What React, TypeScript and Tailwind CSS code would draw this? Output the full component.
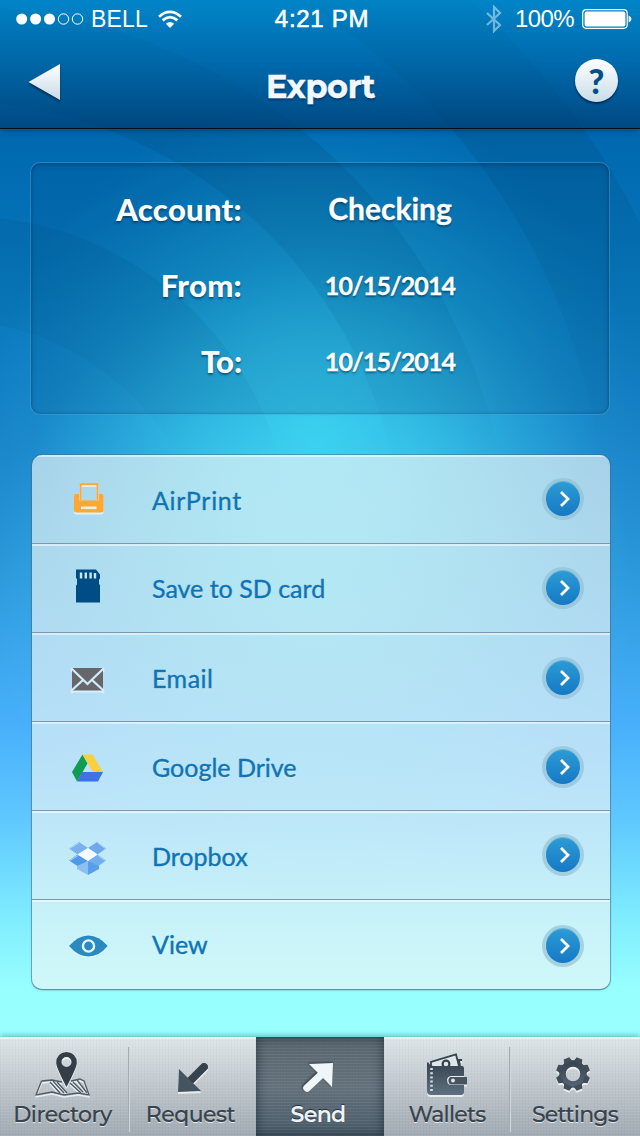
import React from "react";

const LATO = "font-['Lato','Liberation_Sans',sans-serif]";
const HELV = "font-['Liberation_Sans',Arial,sans-serif]";

function Rings() {
  return (
    <svg width="640" height="460" viewBox="0 0 640 460" className="absolute left-0 top-0">
      <defs>
        <linearGradient id="ringFade" x1="0" y1="0" x2="0" y2="460" gradientUnits="userSpaceOnUse">
          <stop offset="0" stopColor="#003a66" stopOpacity=".26" />
          <stop offset=".45" stopColor="#004a75" stopOpacity=".17" />
          <stop offset=".8" stopColor="#005580" stopOpacity=".08" />
          <stop offset="1" stopColor="#005580" stopOpacity="0" />
        </linearGradient>
      </defs>
      <g fill="url(#ringFade)">
        <path d="M0 218A330 330 0 0 1 280 460H180A270 270 0 0 0 0 325Z" />
        <path d="M0 8A560 560 0 0 1 500 460H392A455 455 0 0 0 0 104Z" />
        <path d="M300 0A640 640 0 0 1 600 460H640V223A760 760 0 0 0 470 0Z" />
      </g>
    </svg>
  );
}

function StatusBar() {
  return (
    <div className={`grid h-[38px] grid-cols-[1fr_100px_1fr] items-center text-white ${HELV}`}>
      <div className="flex items-center pl-[16px]">
        <svg width="68" height="14" viewBox="0 0 68 14">
          <g fill="#fff">
            <circle cx="5.700" cy="7" r="5.500" />
            <circle cx="19.600" cy="7" r="5.500" />
            <circle cx="33.500" cy="7" r="5.500" />
          </g>
          <g fill="none" stroke="#fff" strokeWidth="1">
            <circle cx="47.500" cy="7" r="5.200" />
            <circle cx="61.500" cy="7" r="5.200" />
          </g>
        </svg>
        <span className="ml-[7px] text-[23px] leading-none tracking-[0.2px]">BELL</span>
        <svg width="24" height="18" viewBox="0 0 24 18" className="ml-[10px]">
          <path d="M12 18 7.800 13.800Q12 10 16.200 13.800Z" fill="#fff" />
          <path d="M4.600 10.400Q12 3.800 19.400 10.400M1 6.700Q12 -3 23 6.700" fill="none" stroke="#fff" strokeWidth="2.800" />
        </svg>
      </div>
      <span className="whitespace-nowrap pl-[4px] text-center text-[24px] leading-none tracking-[0.7px] [-webkit-text-stroke:0.6px_white]">4:21 PM</span>
      <div className="flex items-center justify-end pr-[8px]">
        <svg width="16" height="28" viewBox="0 0 16 28" className="mr-[13px] opacity-45">
          <path d="M1 8 14 20 8 26V2L14 8 1 20" fill="none" stroke="#fff" strokeWidth="2.200" />
        </svg>
        <span className="mr-[8px] text-[24px] leading-none tracking-[-0.6px]">100%</span>
        <svg width="50" height="20" viewBox="0 0 50 20">
          <rect x=".7" y=".7" width="44.500" height="18.600" rx="3.500" fill="none" stroke="#fff" strokeWidth="1.200" />
          <rect x="2.600" y="2.600" width="40.800" height="14.800" rx="2" fill="#fff" />
          <path d="M46.600 6.500Q49.500 7.500 49.500 10T46.600 13.500Z" fill="#fff" />
        </svg>
      </div>
    </div>
  );
}

function Header() {
  return (
    <header className="relative z-10 h-[129px] border-b border-[#04101f] bg-[linear-gradient(rgba(0,140,206,0.8),rgba(0,110,175,0.65)_45%,rgba(0,62,116,0.75))] shadow-[0_2px_6px_rgba(0,40,70,0.45)]">
      <StatusBar />
      <div className="flex h-[90px] items-center justify-between pl-[28px] pr-[22px]">
        <svg width="33" height="38" viewBox="28 64 33 38" className="drop-shadow-[0_2px_1px_rgba(0,20,50,0.6)]">
          <defs>
            <linearGradient id="btn" x1="0" y1="0" x2="0" y2="1">
              <stop offset="0" stopColor="#fff" />
              <stop offset="1" stopColor="#c8dbe6" />
            </linearGradient>
          </defs>
          <path d="M28.500 82 60 64V100Z" fill="url(#btn)" />
        </svg>
        <h1 className="ml-[5px] mt-[7px] font-['Montserrat','Lato',sans-serif] text-[32px] font-bold leading-none tracking-[-0.4px] text-[#f2f8ff] [-webkit-text-stroke:0.4px_#f2f8ff] [text-shadow:0_2px_2px_rgba(0,20,50,0.45)]">
          Export
        </h1>
        <div className="mb-[5px] flex size-[43px] items-center justify-center rounded-full bg-linear-to-b from-white to-[#cadde8] shadow-[0_2px_2px_rgba(0,20,50,0.6)]">
          <span className="font-['Lato',sans-serif] text-[34px] font-black leading-none text-[#005087]">?</span>
        </div>
      </div>
    </header>
  );
}

const fields = [
  { label: "Account:", value: "Checking", cls: "text-[30px] pb-[3px]", track: "tracking-[0.3px]" },
  { label: "From:", value: "10/15/2014", cls: "text-[25px] pt-px tracking-[-0.9px]", track: "tracking-[0.3px]" },
  { label: "To:", value: "10/15/2014", cls: "text-[25px] pt-px tracking-[-0.9px]", track: "" },
];

function Filters() {
  return (
    <section
      className={`mx-[30px] mt-[33px] flex h-[253px] flex-col rounded-[10px] border border-[#5cc3ee]/35 bg-[#004a80]/20 pt-[8px] font-bold text-white shadow-[inset_0_2px_5px_rgba(0,40,80,0.35),inset_0_0_3px_rgba(0,40,80,0.25)] ${LATO}`}
    >
      {fields.map((f) => (
        <div key={f.label} className="flex h-[76px] items-center leading-none [text-shadow:0_2px_2px_rgba(0,30,60,0.5)]">
          <span className={`w-[211px] text-right text-[31px] font-black ${f.track}`}>{f.label}</span>
          <span className={`ml-[53px] w-[190px] text-center [-webkit-text-stroke:0.3px_white] ${f.cls}`}>{f.value}</span>
        </div>
      ))}
    </section>
  );
}

const icons: Record<string, React.ReactNode> = {
  print: (
    <svg width="40" height="40" viewBox="68 479.5 40 40" className="drop-shadow-[0_2px_0_rgba(255,255,255,0.6)]">
      <path d="M76 494.500H79V501H99V494.500H101.500Q103.500 494.500 103.500 496.500V511Q103.500 513 101.500 513H76Q74 513 74 511V496.500Q74 494.500 76 494.500Z" fill="#ffa72f" />
      <path d="M80.600 501V484.600H97.400V501" fill="none" stroke="#ffa72f" strokeWidth="1.800" />
      <rect x="81" y="507" width="15.500" height="2.600" fill="#e8eee8" />
    </svg>
  ),
  sd: (
    <svg width="40" height="40" viewBox="68 568.5 40 40">
      <path d="M76 570H96L100 575V579L99 580V585H100V603H76V586L77 585V579H76Z" fill="#004c84" />
      <path d="M81 573V579M85.800 573V579M90.600 573V579M95 573.500V579" stroke="#cce8f6" strokeWidth="2.400" />
    </svg>
  ),
  mail: (
    <svg width="40" height="40" viewBox="68 657.5 40 40" className="drop-shadow-[0_2px_0_rgba(255,255,255,0.5)]">
      <rect x="72" y="668.500" width="31" height="22.500" fill="#65676a" />
      <path d="M71 668.500 87.500 684.500 104 668.500M71 691.500 83 680.500M104 691.500 92 680.500" fill="none" stroke="#d3ebf7" strokeWidth="2.300" />
    </svg>
  ),
  drive: (
    <svg width="40" height="40" viewBox="68 746.5 40 40">
      <path d="M82.500 755 87.500 764 77 782 72 772.500Z" fill="#109d52" />
      <path d="M82.500 755H92.500L103 772.500H93Z" fill="#fcce42" />
      <path d="M82 772.500H103L98 782H77Z" fill="#3f72e6" />
    </svg>
  ),
  dropbox: (
    <svg width="40" height="40" viewBox="68 835.5 40 40" className="overflow-visible">
      <path d="M69 849 79 842.500 88 848.500 77.500 855Z" fill="#78b2ee" />
      <path d="M88 848.500 97 842.500 106 849 97.500 855Z" fill="#6eaaeb" />
      <path d="M69 861 77.500 855 88 861.500 79 867.500Z" fill="#4e9ae8" />
      <path d="M88 861.500 97.500 855 106 861 97 867.500Z" fill="#72adec" />
      <path d="M77.500 855 88 848.500 97.500 855 88 861.500Z" fill="#f4fbff" />
      <path d="M77 866.500 88 861.500V875.500L77 869.500Z" fill="#8ebff1" />
      <path d="M99 866.500 88 861.500V875.500L99 869.500Z" fill="#579fe9" />
      <path d="M70 849 79 843.500M98 843.500 105 849M70 861 78 856M98 856 105 861" stroke="#abd6f8" strokeWidth="1" />
    </svg>
  ),
  view: (
    <svg width="40" height="40" viewBox="68 924.5 40 40" className="drop-shadow-[0_1px_0_rgba(255,255,255,0.5)]">
      <path d="M69 945.500Q78 935 88.300 935Q99 935 107.700 945.500Q99 956 88.300 956Q78 956 69 945.500Z" fill="#2b89c2" />
      <circle cx="88.500" cy="945.500" r="5.600" fill="none" stroke="#e1f7fb" strokeWidth="2.400" />
    </svg>
  ),
};

const rows = [
  { icon: "print", label: "AirPrint", text: "pt-[2px] tracking-[0.7px]", btn: "" },
  { icon: "sd", label: "Save to SD card", text: "", btn: "" },
  { icon: "mail", label: "Email", text: "pt-[2px] tracking-[0.5px]", btn: "mt-[1px]" },
  { icon: "drive", label: "Google Drive", text: "pt-[2px]", btn: "mt-[2px]" },
  { icon: "dropbox", label: "Dropbox", text: "pt-[2px]", btn: "" },
  { icon: "view", label: "View", text: "", btn: "mt-[2px]" },
];

function ExportList() {
  return (
    <ul className={`ml-[32px] mr-[30px] mt-[40px] overflow-hidden rounded-[10px] shadow-[0_0_0_1px_rgba(70,110,140,0.5),0_1px_2px_rgba(50,90,110,0.6)] ${LATO}`}>
      {rows.map((r) => (
        <li
          key={r.label}
          className="flex h-[89px] items-center border-b border-[#7d98ad] bg-[#ebf4f6]/67 pl-[36px] pr-[26px] shadow-[inset_0_2px_0_rgba(255,255,255,0.5)] last:border-b-0"
        >
          {icons[r.icon]}
          <span className={`ml-[44px] flex-1 text-[25px] leading-none text-[#0f74b4] [-webkit-text-stroke:0.4px_#0f74b4] [text-shadow:0_1px_0_rgba(255,255,255,0.5)] ${r.text}`}>
            {r.label}
          </span>
          <span className={`flex size-[42px] items-center justify-center rounded-full bg-[#90bfd3]/65 ${r.btn}`}>
            <span className="flex size-[34px] items-center justify-center rounded-full bg-linear-to-b from-[#2c9bd5] to-[#1579c4] shadow-[0_-1px_0_#62b7d8]">
              <svg width="12" height="18" viewBox="0 0 12 18" className="ml-[3px]">
                <path d="M2 2 9 9 2 16" fill="none" stroke="#fff" strokeWidth="2.800" />
              </svg>
            </span>
          </span>
        </li>
      ))}
    </ul>
  );
}

const tabIcons: Record<string, React.ReactNode> = {
  directory: (
    <>
      <g fill="none" stroke="#4f5d68" strokeWidth="1.300">
        <path d="M41.500 1081 52 1080 62 1082M71 1081 80 1079 84 1081 89 1095 78 1093 64 1095 52 1092 36 1095 41.500 1081" />
        <path d="M50 1082 60 1093M53 1081 64 1093M57 1082 67 1093M70 1083 81 1093M73 1082 83 1092M77 1080 87 1093" />
      </g>
      <path fillRule="evenodd" d="M66.500 1052Q76.800 1053 76.800 1063Q76.500 1068 66.500 1087Q56.500 1068 56.200 1063Q56.200 1053 66.500 1052ZM66.500 1057A5 5 0 1 0 66.500 1067A5 5 0 1 0 66.500 1057Z" fill="#333e47" />
    </>
  ),
  request: (
    <>
      <path d="M204 1067 188 1083" stroke="#36424c" strokeWidth="8" strokeLinecap="round" />
      <path d="M179 1069 201 1091 178 1092Z" fill="#46545f" />
    </>
  ),
  send: (
    <>
      <path d="M307 1088 324 1072" stroke="#f0f5f9" strokeWidth="7.500" strokeLinecap="round" />
      <path d="M309 1064 333 1063 332 1087Z" fill="#f0f5f9" />
    </>
  ),
  wallets: (
    <>
      <path d="M431 1066V1062L456 1054.500 459 1066" fill="#dfe6e9" stroke="#36424c" strokeWidth="1.800" />
      <path d="M458 1060H462M460 1066 459 1060" fill="none" stroke="#36424c" strokeWidth="1.800" />
      <circle cx="446" cy="1064" r="3.400" fill="none" stroke="#36424c" strokeWidth="2.200" />
      <path d="M428 1062Q430 1066 434 1066H462Q464 1066 464 1068V1076H452Q447 1076 447 1080.500T452 1085H464V1092Q464 1095 461 1095H431Q427 1095 427 1091V1063Z" fill="url(#tabInk)" />
      <path d="M451 1077H467V1084.500H451Q448.500 1084 448.500 1080.500T451 1077Z" fill="#46545f" />
      <circle cx="453" cy="1080.500" r="1.900" fill="#e3e9ed" />
      <path d="M431.500 1068V1093" stroke="#d4dce1" strokeWidth="2.600" strokeDasharray="2 2.200" />
    </>
  ),
  settings: (
    <g>
      <circle cx="573" cy="1074" r="10.500" fill="none" stroke="url(#tabInk)" strokeWidth="6.500" />
      {[22.5, 67.5, 112.5, 157.5, 202.5, 247.5, 292.5, 337.5].map((a) => (
        <path key={a} d="M568.500 1062 570 1057H576L577.500 1062Z" fill="#414e59" transform={`rotate(${a} 573 1074)`} />
      ))}
    </g>
  ),
};

const tabs = [
  { id: "directory", label: "Directory", w: "w-[129px]", box: "0 1047 129 54", width: 129, text: "tracking-[-0.5px] mr-[4px]" },
  { id: "request", label: "Request", w: "w-[127px]", box: "129 1047 127 54", width: 127, text: "tracking-[-0.5px] mr-[4px]" },
  { id: "send", label: "Send", w: "w-[128px]", box: "256 1047 128 54", width: 128, text: "tracking-[-0.7px] mr-[4px]" },
  { id: "wallets", label: "Wallets", w: "w-[126px]", box: "384 1047 126 54", width: 126, text: "tracking-[-0.8px]" },
  { id: "settings", label: "Settings", w: "w-[130px]", box: "510 1047 130 54", width: 130, text: "tracking-[-0.8px]" },
];

function TabBar() {
  return (
    <nav className="flex h-[99px] shadow-[0_-2px_5px_rgba(40,120,140,0.45)]">
      {tabs.map((t) => {
        const active = t.id === "send";
        return (
          <div
            key={t.id}
            className={`relative flex flex-col items-center pt-[10px] ${t.w} ${
              active
                ? "bg-linear-to-b from-[#59666f] via-[#64727c] to-[#4a5b69] shadow-[inset_0_0_12px_rgba(20,32,45,0.75)]"
                : "bg-linear-to-b from-[#dfe6e9] to-[#a1aab2] shadow-[inset_0_2px_0_rgba(255,255,255,0.6)]"
            }`}
          >
            <div className="absolute inset-0 bg-[repeating-linear-gradient(0deg,rgba(255,255,255,0.06)_0px,rgba(255,255,255,0.06)_1px,transparent_1px,transparent_3px),repeating-linear-gradient(90deg,rgba(40,50,60,0.03)_0px,rgba(40,50,60,0.03)_1px,transparent_1px,transparent_3px)]" />
            {(t.id === "directory" || t.id === "wallets") && (
              <div className="absolute -right-px top-[10px] z-10 h-[85px] w-[2px] bg-linear-to-r from-[#8d989f] to-[#e6ebee]" />
            )}
            <svg
              width={t.width}
              height="54"
              viewBox={t.box}
              className={active ? "relative drop-shadow-[-1px_-1px_1px_rgba(20,30,40,0.6)]" : "relative drop-shadow-[0_2px_0_rgba(255,255,255,0.7)]"}
            >
              <defs>
                <linearGradient id="tabInk" x1="0" y1="1055" x2="0" y2="1095" gradientUnits="userSpaceOnUse">
                  <stop offset="0" stopColor="#2f3a43" />
                  <stop offset="1" stopColor="#5e7080" />
                </linearGradient>
              </defs>
              {tabIcons[t.id]}
            </svg>
            <span
              className={`relative mt-px whitespace-nowrap font-['Montserrat','Inter',sans-serif] text-[22px] leading-[26px] ${t.text} ${
                active
                  ? "font-semibold text-[#eef3f7] [text-shadow:0_-1px_1px_rgba(20,30,40,0.8)]"
                  : "font-medium text-[#37434d] [-webkit-text-stroke:0.2px_#37434d] [text-shadow:0_1px_0_rgba(255,255,255,0.7)]"
              }`}
            >
              {t.label}
            </span>
          </div>
        );
      })}
    </nav>
  );
}

export default function App() {
  return (
    <div className="relative flex h-[1136px] w-[640px] flex-col overflow-hidden bg-[radial-gradient(ellipse_320px_330px_at_315px_600px,rgba(90,225,245,0.5),rgba(90,225,245,0.28)_50%,rgba(90,225,245,0)_100%),radial-gradient(ellipse_330px_350px_at_315px_445px,rgba(48,206,240,0.95),rgba(48,204,240,0.7)_30%,rgba(45,200,235,0.34)_60%,rgba(40,190,230,0.1)_85%,rgba(40,190,230,0)_100%),linear-gradient(#0069b0_0px,#0069b0_140px,#0878bd_300px,#1b85ca_450px,#2d9add_580px,#48b0fb_725px,#5fc8ff_820px,#80edff_920px,#98ffff_990px,#9bffff)]">
      <Rings />
      <div className="relative flex h-full flex-col">
        <Header />
        <main className="flex-1">
          <Filters />
          <ExportList />
        </main>
        <TabBar />
      </div>
    </div>
  );
}
